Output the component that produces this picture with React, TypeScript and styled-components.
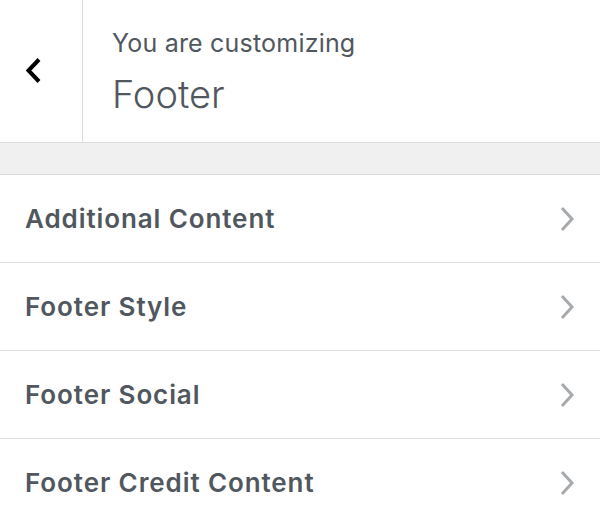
import styled, { createGlobalStyle } from 'styled-components';

const Global = createGlobalStyle`
  body {
    margin: 0;
    background: #fff;
    font-family: Inter, "Noto Sans", sans-serif;
  }
`;

const S = {
  panel: styled.div`
    width: 600px;
    height: 520px;
    overflow: hidden;
    background: #fff;
  `,
  header: styled.div`
    display: flex;
    height: 142px;
    border-bottom: 1px solid #dcdcde;
  `,
  back: styled.button`
    width: 83px;
    flex: none;
    display: flex;
    align-items: center;
    justify-content: center;
    padding: 0 14px 0 0;
    background: #fff;
    border: none;
    border-right: 1px solid #dcdcde;
    cursor: pointer;
  `,
  titles: styled.div`
    padding: 28px 0 0 29px;
    color: #50575e;
  `,
  kicker: styled.div`
    font-size: 25px;
    line-height: 30px;
    font-weight: 400;
    letter-spacing: 0.2px;
  `,
  title: styled.div`
    font-size: 38px;
    line-height: 48px;
    font-weight: 300;
    margin-top: 12px;
    color: #50575e;
  `,
  band: styled.div`
    height: 31px;
    background: #f0f0f1;
    border-bottom: 1px solid #dcdcde;
  `,
  row: styled.div`
    display: flex;
    align-items: center;
    justify-content: space-between;
    height: 87px;
    padding: 0 24px 0 25px;
    border-bottom: 1px solid #dcdcde;
    color: #50575e;
    font-size: 26px;
    font-weight: 600;
    letter-spacing: 0.9px;
    cursor: pointer;
  `,
};

const sections = [
  'Additional Content',
  'Footer Style',
  'Footer Social',
  'Footer Credit Content',
];

const Chevron = () => (
  <svg width="18" height="28" viewBox="0 0 18 28" fill="none">
    <path d="M4 3 L14 14 L4 25" stroke="#a7aaad" strokeWidth="3" />
  </svg>
);

export default function App() {
  return (
    <>
      <Global />
      <S.panel>
        <S.header>
          <S.back aria-label="Back">
            <svg width="20" height="28" viewBox="0 0 20 28" fill="none">
              <path d="M15 2.5 L4.5 13.5 L15 24.5" stroke="#000" strokeWidth="4" />
            </svg>
          </S.back>
          <S.titles>
            <S.kicker>You are customizing</S.kicker>
            <S.title>Footer</S.title>
          </S.titles>
        </S.header>
        <S.band />
        {sections.map(s => (
          <S.row key={s}>
            <span>{s}</span>
            <Chevron />
          </S.row>
        ))}
      </S.panel>
    </>
  );
}
